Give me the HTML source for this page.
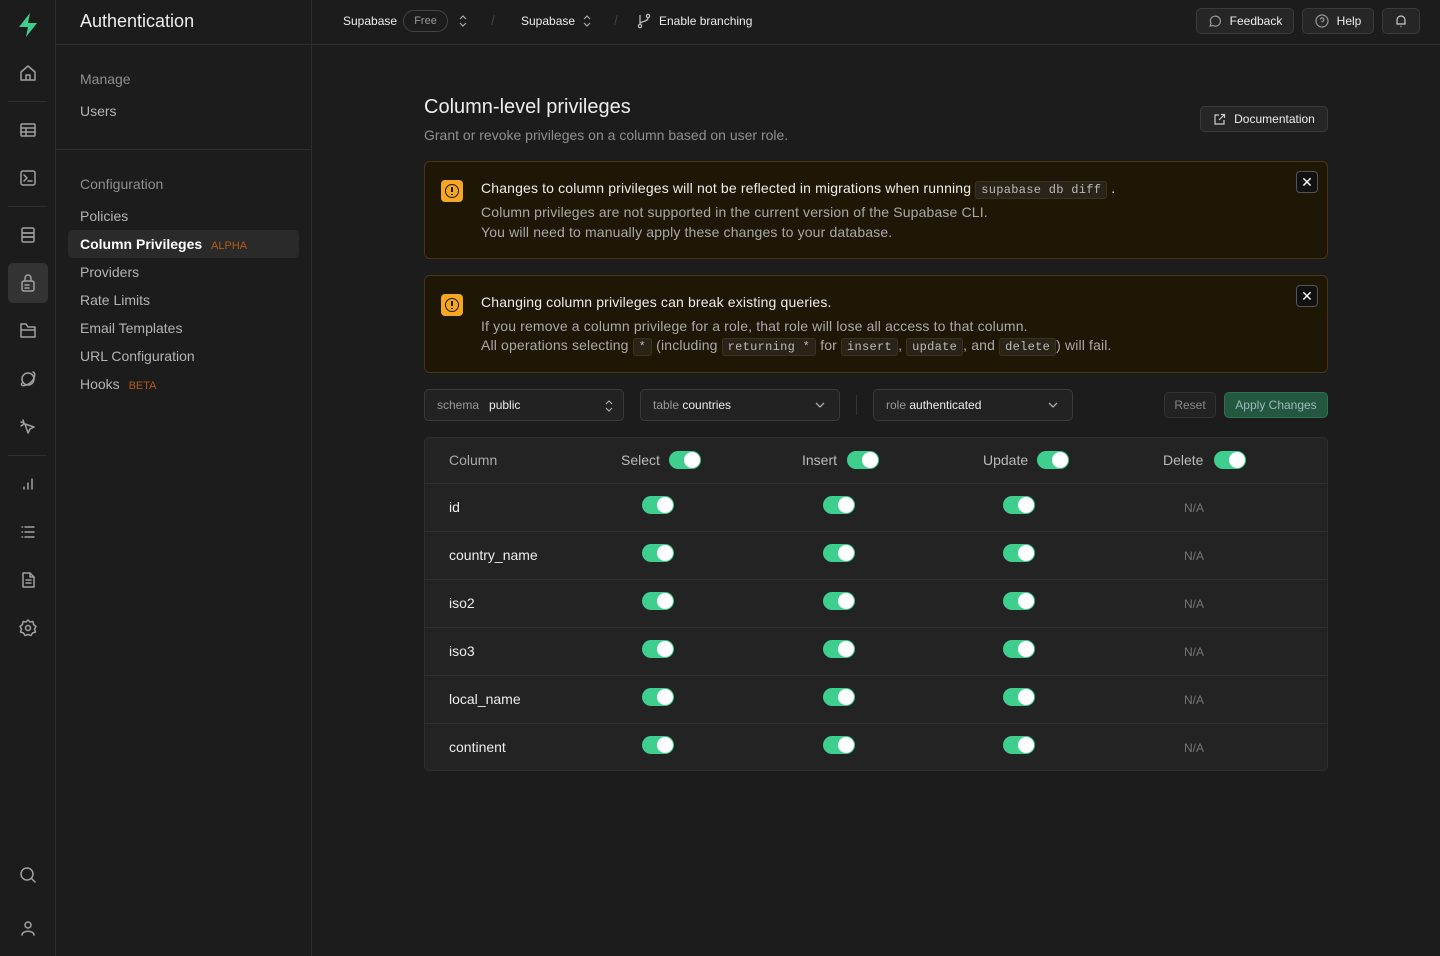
<!DOCTYPE html>
<html><head><meta charset="utf-8"><style>
*{box-sizing:border-box;margin:0;padding:0}
body{width:1440px;height:956px;background:#1c1c1c;font-family:"Liberation Sans",sans-serif;color:#ededed;position:relative;overflow:hidden;font-size:14px}
.abs{position:absolute}
.rail{left:0;top:0;width:56px;height:956px;border-right:1px solid #2e2e2e;background:#1c1c1c}
.rail svg{position:absolute;left:18px;width:20px;height:20px;fill:none;stroke:#a0a0a0;stroke-width:1.5;stroke-linecap:round;stroke-linejoin:round}
.sep{position:absolute;left:8px;width:39px;height:1px;background:#2e2e2e}
.panel{left:56px;top:0;width:256px;height:956px;border-right:1px solid #2e2e2e}
.panel .it{position:absolute;left:24px;font-size:14px;color:#b4b4b4}
.top{left:312px;top:0;width:1128px;height:45px;border-bottom:1px solid #2e2e2e}
.btn{position:absolute;border:1px solid #3a3a3a;background:#262626;border-radius:5px;font-size:12px;color:#ededed;display:flex;align-items:center;justify-content:center;gap:8px}
.alert{position:absolute;left:424px;width:904px;background:#1f1705;border:1px solid #4a3510;border-radius:6px}
.ic{position:absolute;left:16px;top:18px;width:22px;height:22px;background:#f5a623;border-radius:4px}
.ic:after{content:"";position:absolute;left:4px;top:4px;width:14px;height:14px;border:1.5px solid #1f1705;border-radius:50%;box-sizing:border-box}
.ic b{position:absolute;left:10.3px;top:7px;width:1.5px;height:5px;background:#1f1705}
.ic i{position:absolute;left:10.3px;top:13.5px;width:1.5px;height:1.5px;background:#1f1705}
.x{position:absolute;right:9px;top:9px;width:22px;height:22px;border:1px solid #555;border-radius:4px;background:#111;color:#fff;font-size:14px;text-align:center;line-height:20px}
.t1{position:absolute;left:56px;font-size:14px;color:#ededed;letter-spacing:0.15px}
.t2{position:absolute;left:56px;font-size:14px;color:#a9a9a9;white-space:nowrap;letter-spacing:0.15px}
code{font-family:"Liberation Mono",monospace;font-size:12px;background:#2a2418;border:1px solid #3b3222;border-radius:3px;padding:1px 5px;color:#bbb;letter-spacing:0.3px}
.sel{position:absolute;top:389px;height:32px;border:1px solid #3a3a3a;background:#222;border-radius:5px;font-size:12px;color:#ededed;padding-left:12px;line-height:30px}
.sel span{color:#999}
.tbl{position:absolute;left:424px;top:437px;width:904px;height:334px;background:#232323;border:1px solid #2e2e2e;border-radius:5px;overflow:hidden}
.row{position:absolute;left:0;width:902px;height:48px;border-top:1px solid #2e2e2e;font-size:14px}
.tg{position:absolute;width:32px;height:18px;background:#3ecf8e;border-radius:9px}
.tg:after{content:"";position:absolute;right:1px;top:1px;width:16px;height:16px;background:#fff;border-radius:50%}
.na{position:absolute;left:759px;font-size:12px;color:#777}
.ud{position:absolute;width:8px;height:12px}
</style></head><body>
<div class="abs rail">
 <svg style="top:12px;left:16px;width:24px;height:26px" viewBox="0 0 24 26"><path d="M14 1 L3 15 H12 L10 25 L21 11 H12 Z" fill="#3ecf8e" stroke="none"/></svg>
 <svg style="top:63px" viewBox="0 0 20 20"><path d="M3 9 L10 3 L17 9 V17 H3 Z M8 17 V12 H12 V17"/></svg>
 <div class="sep" style="top:101px"></div>
 <svg style="top:120px" viewBox="0 0 20 20"><rect x="3" y="4" width="14" height="12" rx="1"/><path d="M3 8 H17 M3 12 H17 M8 8 V16"/></svg>
 <svg style="top:168px" viewBox="0 0 20 20"><rect x="3" y="3" width="14" height="14" rx="2"/><path d="M6 7 L9 10 L6 13 M10 13 H14"/></svg>
 <div class="sep" style="top:206px"></div>
 <svg style="top:225px" viewBox="0 0 20 20"><rect x="4" y="3" width="12" height="5" rx="1.5"/><rect x="4" y="8" width="12" height="4"/><rect x="4" y="12" width="12" height="5" rx="1.5"/></svg>
 <div class="abs" style="left:8px;top:263px;width:40px;height:40px;background:#333;border-radius:5px"></div>
 <svg style="top:273px" viewBox="0 0 20 20"><path d="M7 8 V5 A3 3 0 0 1 13 5 V8"/><rect x="4" y="8" width="12" height="10" rx="2"/><path d="M7 12 H11 M7 15 H11"/></svg>
 <svg style="top:321px" viewBox="0 0 20 20"><path d="M3 7 V16 H17 V6 H10 L8 3 H3 Z M3 9 H17"/></svg>
 <svg style="top:369px" viewBox="0 0 20 20"><circle cx="10" cy="10" r="6"/><path d="M4 14 C2 17 6 18 12 14 C17 10 18 4 15 3"/></svg>
 <svg style="top:417px" viewBox="0 0 20 20"><path d="M7 7 L16 10 L12 12 L10 16 Z M3 5 L6 6 M5 3 L6 6 M3 9 L6 7"/></svg>
 <div class="sep" style="top:455px"></div>
 <svg style="top:474px" viewBox="0 0 20 20"><path d="M6 15 V13 M10 15 V9 M14 15 V5"/></svg>
 <svg style="top:522px" viewBox="0 0 20 20"><path d="M4 5 H4.5 M4 10 H4.5 M4 15 H4.5 M7 5 H16 M7 10 H16 M7 15 H16"/></svg>
 <svg style="top:570px" viewBox="0 0 20 20"><path d="M5 3 H12 L16 7 V17 H5 Z M12 3 V7 H16 M8 10 H13 M8 13 H13"/></svg>
 <svg style="top:618px" viewBox="0 0 20 20"><circle cx="10" cy="10" r="2.5"/><path d="M10 2 L12 4 L15 3.5 L15.5 6.5 L18 8.5 L16.5 11 L17.5 14 L14.5 15 L13 17.5 L10 16.5 L7 17.5 L5.5 15 L2.5 14 L3.5 11 L2 8.5 L4.5 6.5 L5 3.5 L8 4 Z"/></svg>
 <svg style="top:865px" viewBox="0 0 20 20"><circle cx="9" cy="9" r="6"/><path d="M13.5 13.5 L17 17"/></svg>
 <svg style="top:918px" viewBox="0 0 20 20"><circle cx="10" cy="7" r="3"/><path d="M4 17 C4 12 16 12 16 17"/></svg>
</div>
<div class="abs panel">
 <div class="abs" style="left:24px;top:11px;font-size:18px;color:#ededed">Authentication</div>
 <div class="abs" style="left:0;top:44px;width:255px;height:1px;background:#2e2e2e"></div>
 <div class="it" style="top:71px;color:#8f8f8f">Manage</div>
 <div class="it" style="top:103px">Users</div>
 <div class="abs" style="left:0;top:149px;width:255px;height:1px;background:#2e2e2e"></div>
 <div class="it" style="top:176px;color:#8f8f8f">Configuration</div>
 <div class="it" style="top:208px">Policies</div>
 <div class="abs" style="left:12px;top:230px;width:231px;height:28px;background:#2a2a2a;border-radius:5px"></div>
 <div class="it" style="top:236px;color:#fff;font-weight:bold">Column Privileges <span style="color:#b35a1a;font-size:11px;font-weight:normal;margin-left:5px">ALPHA</span></div>
 <div class="it" style="top:264px">Providers</div>
 <div class="it" style="top:292px">Rate Limits</div>
 <div class="it" style="top:320px">Email Templates</div>
 <div class="it" style="top:348px">URL Configuration</div>
 <div class="it" style="top:376px">Hooks <span style="color:#b35a1a;font-size:11px;margin-left:5px">BETA</span></div>
</div>
<div class="abs top">
 <div class="abs" style="left:31px;top:14px;font-size:12px">Supabase</div>
 <div class="abs" style="left:91px;top:10px;width:45px;height:22px;border:1px solid #444;border-radius:11px;font-size:11px;color:#999;text-align:center;line-height:20px">Free</div>
 <svg class="ud" style="left:147px;top:15px" viewBox="0 0 8 12" fill="none" stroke="#aaa" stroke-width="1.2"><path d="M1 4 L4 1 L7 4 M1 8 L4 11 L7 8"/></svg>
 <div class="abs" style="left:179px;top:12px;color:#444">/</div>
 <div class="abs" style="left:209px;top:14px;font-size:12px">Supabase</div>
 <svg class="ud" style="left:271px;top:15px" viewBox="0 0 8 12" fill="none" stroke="#aaa" stroke-width="1.2"><path d="M1 4 L4 1 L7 4 M1 8 L4 11 L7 8"/></svg>
 <div class="abs" style="left:302px;top:12px;color:#444">/</div>
 <svg class="abs" style="left:325px;top:13px" width="14" height="16" viewBox="0 0 14 16" fill="none" stroke="#bbb" stroke-width="1.3"><circle cx="3" cy="13" r="1.6"/><circle cx="11" cy="3" r="1.6"/><path d="M3 2 V11 M11 5 C11 9 3 8 3 11"/></svg>
 <div class="abs" style="left:347px;top:14px;font-size:12px">Enable branching</div>
</div>
<div class="btn" style="left:1196px;top:8px;width:98px;height:26px"><svg width="14" height="14" viewBox="0 0 14 14" fill="none" stroke="#999" stroke-width="1.2"><path d="M2 12 L3 9.5 A5 5 0 1 1 5 11.5 Z"/></svg>Feedback</div>
<div class="btn" style="left:1302px;top:8px;width:72px;height:26px"><svg width="14" height="14" viewBox="0 0 14 14" fill="none" stroke="#999" stroke-width="1.2"><circle cx="7" cy="7" r="6"/><path d="M5.3 5.5 A1.8 1.8 0 1 1 7 7.5 V8.3 M7 10 V10.3"/></svg>Help</div>
<div class="btn" style="left:1382px;top:8px;width:38px;height:26px"><svg width="14" height="14" viewBox="0 0 14 14" fill="none" stroke="#ccc" stroke-width="1.2"><path d="M3 10 V6 A4 4 0 0 1 11 6 V10 H2.5 H11.5 M6.5 12.5 H7.5"/></svg></div>
<div class="abs" style="left:424px;top:96px;font-size:20px;color:#ededed">Column-level privileges</div>
<div class="abs" style="left:424px;top:127px;font-size:14px;color:#8f8f8f">Grant or revoke privileges on a column based on user role.</div>
<div class="btn" style="left:1200px;top:106px;width:128px;height:26px"><svg width="13" height="13" viewBox="0 0 13 13" fill="none" stroke="#ccc" stroke-width="1.2"><path d="M6 2 H2 V11 H11 V7 M8 1.5 H11.5 V5 M11.5 1.5 L6 7"/></svg>Documentation</div>
<div class="alert" style="top:161px;height:98px">
 <div class="ic"><b></b><i></i></div><div class="x">✕</div>
 <div class="t1" style="top:18px">Changes to column privileges will not be reflected in migrations when running <code>supabase db diff</code> .</div>
 <div class="t2" style="top:42px">Column privileges are not supported in the current version of the Supabase CLI.</div>
 <div class="t2" style="top:62px">You will need to manually apply these changes to your database.</div>
</div>
<div class="alert" style="top:275px;height:98px">
 <div class="ic"><b></b><i></i></div><div class="x">✕</div>
 <div class="t1" style="top:18px">Changing column privileges can break existing queries.</div>
 <div class="t2" style="top:42px">If you remove a column privilege for a role, that role will lose all access to that column.</div>
 <div class="t2" style="top:61px">All operations selecting <code>*</code> (including <code>returning *</code> for <code>insert</code>, <code>update</code>, and <code>delete</code>) will fail.</div>
</div>
<div class="sel" style="left:424px;width:200px"><span>schema</span>&nbsp;&nbsp; public<svg class="ud" style="left:180px;top:10px" viewBox="0 0 8 12" fill="none" stroke="#aaa" stroke-width="1.2"><path d="M1 4 L4 1 L7 4 M1 8 L4 11 L7 8"/></svg></div>
<div class="sel" style="left:640px;width:200px"><span>table</span> countries<svg style="position:absolute;right:14px;top:11px" width="10" height="8" viewBox="0 0 10 8" fill="none" stroke="#aaa" stroke-width="1.3"><path d="M1 2 L5 6 L9 2"/></svg></div>
<div class="abs" style="left:856px;top:395px;width:1px;height:20px;background:#333"></div>
<div class="sel" style="left:873px;width:200px"><span>role</span> authenticated<svg style="position:absolute;right:14px;top:11px" width="10" height="8" viewBox="0 0 10 8" fill="none" stroke="#aaa" stroke-width="1.3"><path d="M1 2 L5 6 L9 2"/></svg></div>
<div class="btn" style="left:1164px;top:392px;width:52px;height:26px;color:#888;background:#222;border-color:#333">Reset</div>
<div class="btn" style="left:1224px;top:392px;width:104px;height:26px;color:#9bb;background:#24573f;border-color:#2f7051">Apply Changes</div>
<div class="tbl">
 <div class="abs" style="left:24px;top:14px;color:#aaa">Column</div>
 <div class="abs" style="left:196px;top:14px;color:#bbb">Select</div><div class="tg" style="left:244px;top:13px"></div>
 <div class="abs" style="left:377px;top:14px;color:#bbb">Insert</div><div class="tg" style="left:422px;top:13px"></div>
 <div class="abs" style="left:558px;top:14px;color:#bbb">Update</div><div class="tg" style="left:612px;top:13px"></div>
 <div class="abs" style="left:738px;top:14px;color:#bbb">Delete</div><div class="tg" style="left:789px;top:13px"></div>
 <div class="row" style="top:45px"><div class="abs" style="left:24px;top:15px">id</div><div class="tg" style="left:217px;top:12px"></div><div class="tg" style="left:398px;top:12px"></div><div class="tg" style="left:578px;top:12px"></div><div class="na" style="top:17px">N/A</div></div>
 <div class="row" style="top:93px"><div class="abs" style="left:24px;top:15px">country_name</div><div class="tg" style="left:217px;top:12px"></div><div class="tg" style="left:398px;top:12px"></div><div class="tg" style="left:578px;top:12px"></div><div class="na" style="top:17px">N/A</div></div>
 <div class="row" style="top:141px"><div class="abs" style="left:24px;top:15px">iso2</div><div class="tg" style="left:217px;top:12px"></div><div class="tg" style="left:398px;top:12px"></div><div class="tg" style="left:578px;top:12px"></div><div class="na" style="top:17px">N/A</div></div>
 <div class="row" style="top:189px"><div class="abs" style="left:24px;top:15px">iso3</div><div class="tg" style="left:217px;top:12px"></div><div class="tg" style="left:398px;top:12px"></div><div class="tg" style="left:578px;top:12px"></div><div class="na" style="top:17px">N/A</div></div>
 <div class="row" style="top:237px"><div class="abs" style="left:24px;top:15px">local_name</div><div class="tg" style="left:217px;top:12px"></div><div class="tg" style="left:398px;top:12px"></div><div class="tg" style="left:578px;top:12px"></div><div class="na" style="top:17px">N/A</div></div>
 <div class="row" style="top:285px"><div class="abs" style="left:24px;top:15px">continent</div><div class="tg" style="left:217px;top:12px"></div><div class="tg" style="left:398px;top:12px"></div><div class="tg" style="left:578px;top:12px"></div><div class="na" style="top:17px">N/A</div></div>
</div>
</body></html>
